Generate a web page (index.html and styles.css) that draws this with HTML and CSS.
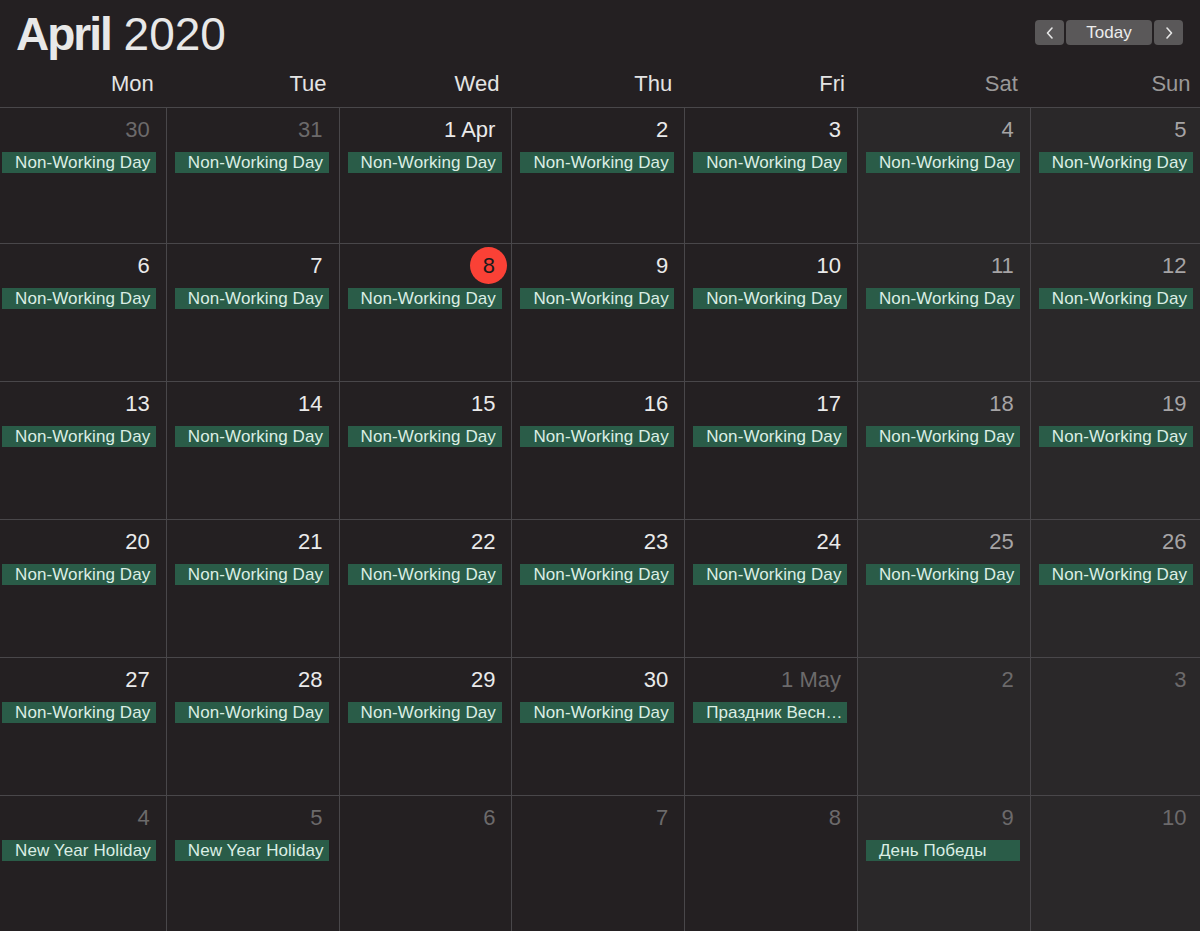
FILE: index.html
```html
<!DOCTYPE html>
<html lang="en">

<head>
    <meta charset="UTF-8">
    <meta name="viewport" content="width=device-width, initial-scale=1.0">
    <title>Calendar - April 2020</title>
    <link rel="stylesheet" href="styles.css">
</head>

<body>
    <div class="toolbar">
        <h1 class="title"><strong>April</strong> 2020</h1>
        <div class="nav">
            <button class="nav-btn nav-arrow" aria-label="Previous month">
                <svg width="10" height="14" viewBox="0 0 10 14"><path d="M7 2 L2.5 7 L7 12" fill="none" stroke="#e6e6e6" stroke-width="1.6" stroke-linecap="round" stroke-linejoin="round"/></svg>
            </button>
            <button class="nav-btn nav-today">Today</button>
            <button class="nav-btn nav-arrow" aria-label="Next month">
                <svg width="10" height="14" viewBox="0 0 10 14"><path d="M3 2 L7.5 7 L3 12" fill="none" stroke="#e6e6e6" stroke-width="1.6" stroke-linecap="round" stroke-linejoin="round"/></svg>
            </button>
        </div>
    </div>

    <div class="weekdays">
        <div class="weekday">Mon</div>
        <div class="weekday">Tue</div>
        <div class="weekday">Wed</div>
        <div class="weekday">Thu</div>
        <div class="weekday">Fri</div>
        <div class="weekday weekend">Sat</div>
        <div class="weekday weekend">Sun</div>
    </div>

    <div class="month">
        <!-- week 1 -->
        <div class="day other"><div class="date"><span>30</span></div><div class="event">Non-Working Day</div></div>
        <div class="day other"><div class="date"><span>31</span></div><div class="event">Non-Working Day</div></div>
        <div class="day"><div class="date"><span>1 Apr</span></div><div class="event">Non-Working Day</div></div>
        <div class="day"><div class="date"><span>2</span></div><div class="event">Non-Working Day</div></div>
        <div class="day"><div class="date"><span>3</span></div><div class="event">Non-Working Day</div></div>
        <div class="day weekend"><div class="date"><span>4</span></div><div class="event">Non-Working Day</div></div>
        <div class="day weekend"><div class="date"><span>5</span></div><div class="event">Non-Working Day</div></div>

        <!-- week 2 -->
        <div class="day"><div class="date"><span>6</span></div><div class="event">Non-Working Day</div></div>
        <div class="day"><div class="date"><span>7</span></div><div class="event">Non-Working Day</div></div>
        <div class="day today"><div class="date"><span>8</span></div><div class="event">Non-Working Day</div></div>
        <div class="day"><div class="date"><span>9</span></div><div class="event">Non-Working Day</div></div>
        <div class="day"><div class="date"><span>10</span></div><div class="event">Non-Working Day</div></div>
        <div class="day weekend"><div class="date"><span>11</span></div><div class="event">Non-Working Day</div></div>
        <div class="day weekend"><div class="date"><span>12</span></div><div class="event">Non-Working Day</div></div>

        <!-- week 3 -->
        <div class="day"><div class="date"><span>13</span></div><div class="event">Non-Working Day</div></div>
        <div class="day"><div class="date"><span>14</span></div><div class="event">Non-Working Day</div></div>
        <div class="day"><div class="date"><span>15</span></div><div class="event">Non-Working Day</div></div>
        <div class="day"><div class="date"><span>16</span></div><div class="event">Non-Working Day</div></div>
        <div class="day"><div class="date"><span>17</span></div><div class="event">Non-Working Day</div></div>
        <div class="day weekend"><div class="date"><span>18</span></div><div class="event">Non-Working Day</div></div>
        <div class="day weekend"><div class="date"><span>19</span></div><div class="event">Non-Working Day</div></div>

        <!-- week 4 -->
        <div class="day"><div class="date"><span>20</span></div><div class="event">Non-Working Day</div></div>
        <div class="day"><div class="date"><span>21</span></div><div class="event">Non-Working Day</div></div>
        <div class="day"><div class="date"><span>22</span></div><div class="event">Non-Working Day</div></div>
        <div class="day"><div class="date"><span>23</span></div><div class="event">Non-Working Day</div></div>
        <div class="day"><div class="date"><span>24</span></div><div class="event">Non-Working Day</div></div>
        <div class="day weekend"><div class="date"><span>25</span></div><div class="event">Non-Working Day</div></div>
        <div class="day weekend"><div class="date"><span>26</span></div><div class="event">Non-Working Day</div></div>

        <!-- week 5 -->
        <div class="day"><div class="date"><span>27</span></div><div class="event">Non-Working Day</div></div>
        <div class="day"><div class="date"><span>28</span></div><div class="event">Non-Working Day</div></div>
        <div class="day"><div class="date"><span>29</span></div><div class="event">Non-Working Day</div></div>
        <div class="day"><div class="date"><span>30</span></div><div class="event">Non-Working Day</div></div>
        <div class="day other"><div class="date"><span>1 May</span></div><div class="event">Праздник Весн…</div></div>
        <div class="day other weekend"><div class="date"><span>2</span></div></div>
        <div class="day other weekend"><div class="date"><span>3</span></div></div>

        <!-- week 6 -->
        <div class="day other"><div class="date"><span>4</span></div><div class="event">New Year Holiday</div></div>
        <div class="day other"><div class="date"><span>5</span></div><div class="event">New Year Holiday</div></div>
        <div class="day other"><div class="date"><span>6</span></div></div>
        <div class="day other"><div class="date"><span>7</span></div></div>
        <div class="day other"><div class="date"><span>8</span></div></div>
        <div class="day other weekend"><div class="date"><span>9</span></div><div class="event">День Победы</div></div>
        <div class="day other weekend"><div class="date"><span>10</span></div></div>
    </div>
</body>

</html>
```

FILE: styles.css
```css
* {
    box-sizing: border-box;
    margin: 0;
    padding: 0;
    font-family: 'Liberation Sans', Arial, sans-serif;
}

body {
    background-color: #242022;
    color: #e6e6e6;
    height: 100vh;
    overflow: hidden;
}

.toolbar {
    display: flex;
    justify-content: space-between;
    align-items: flex-start;
    height: 57px;
    padding: 11px 17px 0 16px;
}

.title {
    font-size: 46px;
    line-height: 46px;
    font-weight: 400;
    color: #e8e8e8;
}

.title strong {
    font-weight: 700;
    letter-spacing: -2px;
}

.nav {
    display: flex;
    gap: 2px;
    margin-top: 9px;
}

.nav-btn {
    height: 25px;
    border: none;
    border-radius: 4px;
    background-color: #5a5859;
    color: #ececec;
    font-size: 17px;
    display: flex;
    align-items: center;
    justify-content: center;
}

.nav-arrow {
    width: 29px;
}

.nav-today {
    width: 86px;
}

.weekdays,
.month {
    display: grid;
    grid-template-columns: repeat(7, 172.8px);
    width: 1210px;
    margin-left: -7px;
}

.weekdays {
    height: 50px;
}

.weekday {
    text-align: right;
    padding: 16px 12px 0 0;
    font-size: 22px;
    line-height: 22px;
    color: #e4e4e4;
}

.weekday.weekend {
    color: #9a9898;
}

.month {
    grid-template-rows: 136px repeat(5, 138px);
}

.day {
    border-top: 1px solid #49474a;
    border-left: 1px solid #49474a;
    overflow: hidden;
}

.day.weekend {
    background-color: #2a2829;
}

.date {
    display: flex;
    justify-content: flex-end;
    padding: 3px 16px 0 0;
    height: 40px;
    font-size: 22px;
    line-height: 37px;
    color: #eaeaea;
}

.day.weekend .date {
    color: #a6a4a5;
}

.day.other .date {
    color: #6c6a6b;
}

.day.today .date span {
    width: 37px;
    height: 37px;
    margin-right: -12px;
    border-radius: 50%;
    background-color: #fa4136;
    color: #1b1a1b;
    text-align: center;
}

.event {
    margin: 4px 0 0 8px;
    width: 154px;
    height: 21px;
    padding: 0 4px 0 13px;
    background-color: #2a5c48;
    color: #dbeee4;
    font-size: 17px;
    letter-spacing: 0.1px;
    line-height: 21px;
    white-space: nowrap;
    overflow: hidden;
    text-overflow: ellipsis;
}
```
